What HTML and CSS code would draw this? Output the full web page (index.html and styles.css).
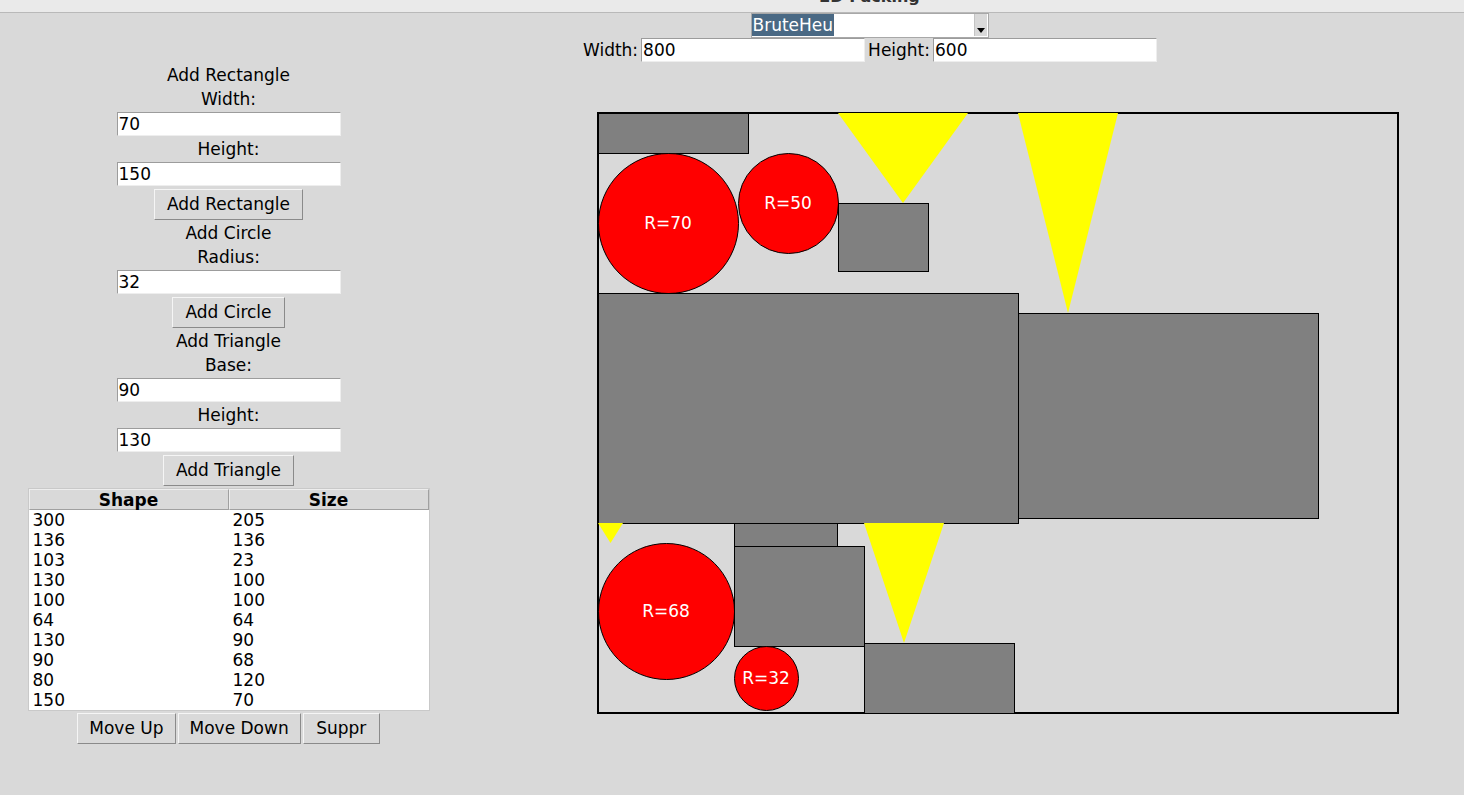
FILE: index.html
```html
<!DOCTYPE html>
<html>
<head>
<meta charset="utf-8">
<title>2D Packing</title>
<link rel="stylesheet" href="styles.css">
</head>
<body>
<div class="titlebar"><div class="title">2D Packing</div></div>
<div class="app">
  <div class="top">
    <div class="combo">
      <span class="combo-sel">BruteHeu</span>
      <span class="combo-fill"></span>
      <span class="combo-btn"><svg width="8" height="5" viewBox="0 0 8 5"><path d="M0 0H8L4 5Z" fill="#000"/></svg></span>
    </div>
    <div class="dims">
      <span class="dim-label">Width:</span>
      <div class="entry">800</div>
      <span class="dim-label dim-label-2">Height:</span>
      <div class="entry">600</div>
    </div>
  </div>
  <div class="main">
    <div class="left">
      <div class="lbl">Add Rectangle</div>
      <div class="lbl">Width:</div>
      <div class="entry">70</div>
      <div class="lbl">Height:</div>
      <div class="entry">150</div>
      <div class="btn">Add Rectangle</div>
      <div class="lbl">Add Circle</div>
      <div class="lbl">Radius:</div>
      <div class="entry">32</div>
      <div class="btn">Add Circle</div>
      <div class="lbl">Add Triangle</div>
      <div class="lbl">Base:</div>
      <div class="entry">90</div>
      <div class="lbl">Height:</div>
      <div class="entry">130</div>
      <div class="btn">Add Triangle</div>
      <div class="tree">
        <div class="tree-head">
          <div class="th">Shape</div>
          <div class="th th-2">Size</div>
        </div>
        <div class="tree-body">
          <div class="tr"><span class="td">300</span><span class="td">205</span></div>
          <div class="tr"><span class="td">136</span><span class="td">136</span></div>
          <div class="tr"><span class="td">103</span><span class="td">23</span></div>
          <div class="tr"><span class="td">130</span><span class="td">100</span></div>
          <div class="tr"><span class="td">100</span><span class="td">100</span></div>
          <div class="tr"><span class="td">64</span><span class="td">64</span></div>
          <div class="tr"><span class="td">130</span><span class="td">90</span></div>
          <div class="tr"><span class="td">90</span><span class="td">68</span></div>
          <div class="tr"><span class="td">80</span><span class="td">120</span></div>
          <div class="tr"><span class="td">150</span><span class="td">70</span></div>
        </div>
      </div>
      <div class="btn-row">
        <div class="btn btn-sm">Move Up</div>
        <div class="btn btn-sm">Move Down</div>
        <div class="btn btn-sm btn-min">Suppr</div>
      </div>
    </div>
    <div class="canvas">
      <svg width="802" height="602" viewBox="0 0 802 602">
        <rect x="1" y="1" width="800" height="600" fill="#d9d9d9" stroke="#000" stroke-width="2"/>
        <g transform="translate(1.5 1.5)" stroke="#000" stroke-width="1">
          <rect x="0" y="0" width="150" height="40" fill="#808080"/>
          <circle cx="70" cy="110" r="70" fill="#ff0000"/>
          <circle cx="190" cy="90" r="50" fill="#ff0000"/>
          <polygon points="239.5,-0.5 369.5,-0.5 304.5,89.5" fill="#ffff00" stroke="none"/>
          <rect x="240" y="90" width="90" height="68" fill="#808080"/>
          <polygon points="419.5,-0.5 519.5,-0.5 469.5,199.5" fill="#ffff00" stroke="none"/>
          <rect x="0" y="180" width="420" height="230" fill="#808080"/>
          <rect x="420" y="200" width="300" height="205" fill="#808080"/>
          <polygon points="-0.5,409.5 24.5,409.5 12,429.5" fill="#ffff00" stroke="none"/>
          <circle cx="68" cy="498" r="68" fill="#ff0000"/>
          <rect x="136" y="410" width="103" height="23" fill="#808080"/>
          <rect x="136" y="433" width="130" height="100" fill="#808080"/>
          <polygon points="265.5,409.5 345.5,409.5 305.5,529.5" fill="#ffff00" stroke="none"/>
          <circle cx="168" cy="565" r="32" fill="#ff0000"/>
          <rect x="266" y="530" width="150" height="70" fill="#808080"/>
        </g>
        <g class="ctext" fill="#ffffff" text-anchor="middle" dominant-baseline="central">
          <text x="71" y="111">R=70</text>
          <text x="191" y="91">R=50</text>
          <text x="69" y="499">R=68</text>
          <text x="169" y="566">R=32</text>
        </g>
      </svg>
    </div>
  </div>
</div>
</body>
</html>
```
FILE: styles.css
```css
html, body {
  margin: 0;
  padding: 0;
  overflow: hidden;
}
body {
  background: #d9d9d9;
  font-family: "DejaVu Sans", sans-serif;
  font-size: 17px;
  color: #000;
  width: 1464px;
  height: 795px;
}
.titlebar {
  height: 12px;
  background: #eaeaea;
  border-bottom: 1px solid #b9b9b9;
  overflow: hidden;
  width: 1739px;
  display: flex;
  justify-content: center;
}
.title {
  font-weight: bold;
  font-size: 16px;
  line-height: 20px;
  margin-top: -13px;
  color: #333;
}
.app {
  width: 1739px;
}
.top {
  display: flex;
  flex-direction: column;
  align-items: center;
}
.combo {
  width: 238px;
  height: 25px;
  box-sizing: border-box;
  border: 1px solid #a8a8a8;
  background: #fff;
  display: flex;
  align-items: stretch;
}
.combo-sel {
  background: #4a6984;
  color: #fff;
  padding: 0 1px;
  line-height: 22px;
  margin: 0 0 1px 0;
}
.combo-fill {
  flex: 1;
}
.combo-btn {
  width: 13px;
  margin: 0 1px 1px 0;
  background: #d9d9d9;
  border-left: 1px solid #c4c4c4;
  display: flex;
  align-items: flex-end;
  justify-content: center;
  padding-bottom: 3px;
  box-sizing: border-box;
}
.dims {
  display: flex;
  align-items: center;
  height: 24px;
}
.dim-label {
  padding: 0 3px 0 1px;
  line-height: 24px;
}
.dim-label-2 {
  padding-left: 3px;
}
.entry {
  width: 224px;
  height: 24px;
  box-sizing: border-box;
  background: #fff;
  border: 1px solid;
  border-color: #9c9c9c #eeeeee #eeeeee #9c9c9c;
  padding-left: 1px;
  line-height: 22px;
}
.main {
  display: flex;
  align-items: flex-start;
}
.left {
  width: 457px;
  display: flex;
  flex-direction: column;
  align-items: center;
  padding-top: 1px;
}
.lbl {
  height: 24px;
  line-height: 24px;
}
.left .entry {
  margin: 1px 0;
}
.btn {
  height: 31px;
  box-sizing: border-box;
  border: 1px solid;
  border-color: #f5f5f5 #8a8a8a #8a8a8a #f5f5f5;
  background: #d9d9d9;
  padding: 0 12px;
  line-height: 29px;
  margin: 2px 0 1px 0;
  white-space: nowrap;
  text-align: center;
}
.tree {
  width: 402px;
  margin-top: 1px;
  border: 1px solid #c9c9c9;
  box-sizing: border-box;
  background: #fff;
}
.tree-head {
  display: flex;
  height: 21px;
  background: #d9d9d9;
}
.th {
  width: 200px;
  box-sizing: border-box;
  text-align: center;
  font-weight: bold;
  line-height: 20px;
  border-right: 1px solid #a0a0a0;
  border-bottom: 1px solid #a0a0a0;
  border-top: 1px solid #eeeeee;
  border-left: 1px solid #eeeeee;
}
.th-2 {
  flex: 1;
}
.tr {
  display: flex;
  height: 20px;
  line-height: 20px;
}
.td {
  width: 200px;
  padding-left: 4px;
  box-sizing: border-box;
}
.btn-row {
  display: flex;
  gap: 2px;
  margin-top: 0;
}
.btn-sm {
  padding: 0 11px;
}
.btn-min {
  min-width: 77px;
}
.canvas {
  margin-left: 140px;
  margin-top: 50px;
  line-height: 0;
}
.ctext text {
  font-family: "DejaVu Sans", sans-serif;
  font-size: 17px;
}
```
